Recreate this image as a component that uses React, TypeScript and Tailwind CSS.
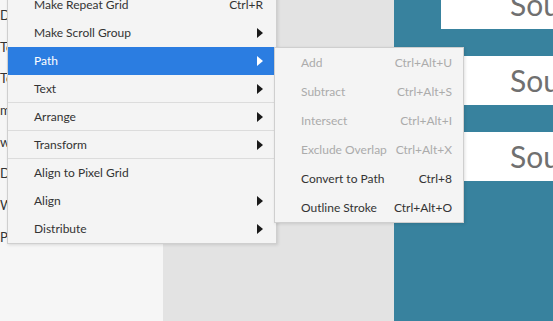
import React from "react";

const font = { fontFamily: 'Lato, "Noto Sans", sans-serif' };

type Item = { label: string; shortcut?: string; sub?: boolean; active?: boolean; sepAfter?: boolean };

const mainItems: Item[] = [
  { label: "Make Repeat Grid", shortcut: "Ctrl+R" },
  { label: "Make Scroll Group", sub: true },
  { label: "Path", sub: true, active: true },
  { label: "Text", sub: true, sepAfter: true },
  { label: "Arrange", sub: true, sepAfter: true },
  { label: "Transform", sub: true, sepAfter: true },
  { label: "Align to Pixel Grid" },
  { label: "Align", sub: true },
  { label: "Distribute", sub: true },
];

const pathItems = [
  { label: "Add", shortcut: "Ctrl+Alt+U", disabled: true },
  { label: "Subtract", shortcut: "Ctrl+Alt+S", disabled: true },
  { label: "Intersect", shortcut: "Ctrl+Alt+I", disabled: true },
  { label: "Exclude Overlap", shortcut: "Ctrl+Alt+X", disabled: true },
  { label: "Convert to Path", shortcut: "Ctrl+8", disabled: false },
  { label: "Outline Stroke", shortcut: "Ctrl+Alt+O", disabled: false },
];

const layers = ["Duplicate", "Text", "Text", "mask", "wave", "Details", "Wrapper", "Powermap"];

function Arrow({ white }: { white?: boolean }) {
  return (
    <svg width="6" height="10" viewBox="0 0 6 10">
      <polygon points="0,0 6,5 0,10" fill={white ? "#ffffff" : "#1a1a1a"} />
    </svg>
  );
}

export default function App() {
  return (
    <div className="relative h-[321px] w-[553px] overflow-hidden text-[12px]" style={font}>
      <div className="flex h-full">
        <div className="flex w-[163px] shrink-0 flex-col gap-[16.7px] bg-[#f6f6f6] pt-[8px] text-[13px] text-[#333]">
          {layers.map((l, i) => (
            <div key={i} className="h-[15px] leading-[15px]">
              {l}
            </div>
          ))}
        </div>
        <div className="w-[231px] shrink-0 bg-[#e3e3e3]" />
        <div className="flex min-w-0 flex-1 flex-col gap-[27px] overflow-hidden bg-[#38829e] pl-[47px]">
          {[0, 1, 2].map((i) => (
            <div
              key={i}
              className={`flex h-[49px] shrink-0 items-center whitespace-nowrap bg-white pl-[69px] text-[30px] text-[#707070] ${i === 0 ? "-mt-[20px]" : ""}`}
            >
              Source
            </div>
          ))}
        </div>
      </div>

      <div className="absolute left-[7px] top-[-10px] w-[270px] border border-[#cfcfcf] bg-[#f4f4f4] text-[#333] shadow-[1px_1px_3px_rgba(0,0,0,0.12)]">
        {mainItems.map((it) => (
          <div
            key={it.label}
            className={`flex h-[28px] items-center justify-between pl-[26px] pr-[13px] ${
              it.active ? "bg-[#2b7de1] text-white" : ""
            } ${it.sepAfter ? "border-b border-[#dcdcdc]" : ""}`}
          >
            <span>{it.label}</span>
            {it.shortcut && <span>{it.shortcut}</span>}
            {it.sub && <Arrow white={it.active} />}
          </div>
        ))}
      </div>

      <div className="absolute left-[274px] top-[47px] w-[190px] border border-[#cfcfcf] bg-[#f4f4f4] shadow-[1px_1px_3px_rgba(0,0,0,0.12)]">
        {pathItems.map((it) => (
          <div
            key={it.label}
            className={`flex h-[29px] items-center justify-between pl-[26px] pr-[11px] ${
              it.disabled ? "text-[#ababab]" : "text-[#333]"
            }`}
          >
            <span>{it.label}</span>
            <span>{it.shortcut}</span>
          </div>
        ))}
      </div>
    </div>
  );
}
